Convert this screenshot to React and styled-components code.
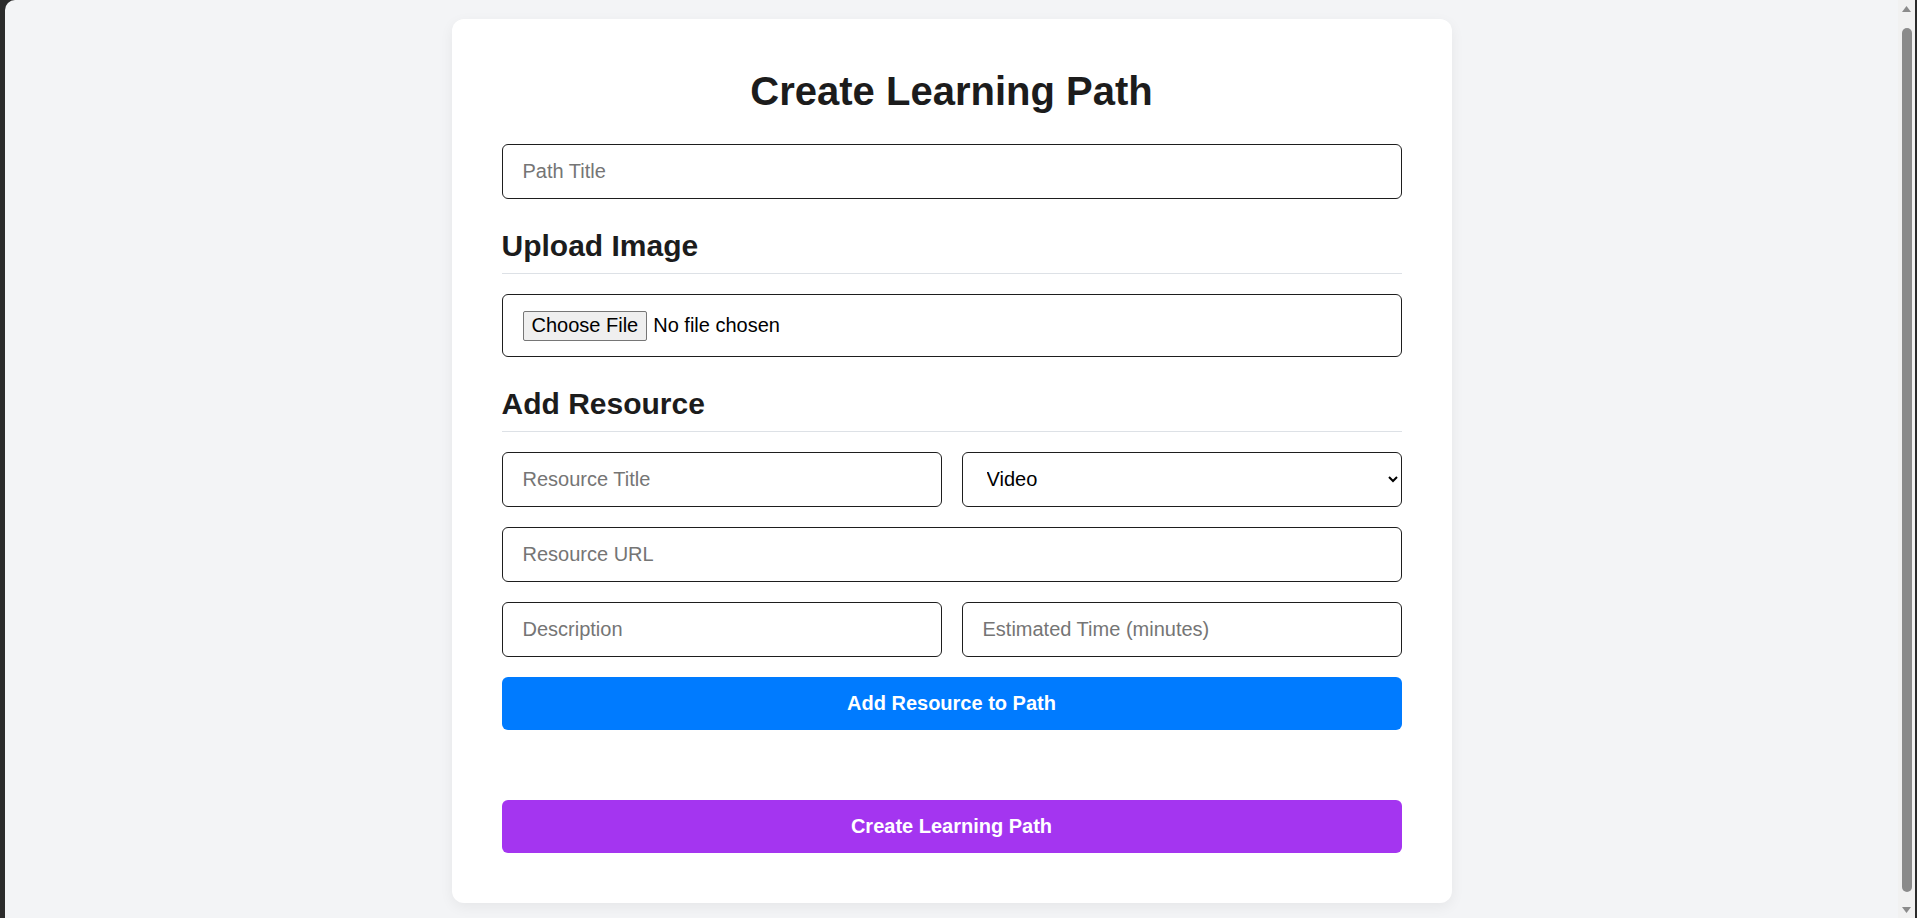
import styled, { createGlobalStyle } from 'styled-components';

const GlobalStyle = createGlobalStyle`
   html, body {
      margin: 0;
      padding: 0;
      background: #2b2b2b;
      overflow: hidden;
   }
   * {
      box-sizing: border-box;
   }
`;

const App = () => {
   return (
      <>
         <GlobalStyle />
         <Shell>
            <Page>
               <Card>
                  <Title>Create Learning Path</Title>
                  <Field type="text" placeholder="Path Title" />

                  <SectionTitle>Upload Image</SectionTitle>
                  <FileField type="file" accept="image/*" />

                  <SectionTitle>Add Resource</SectionTitle>
                  <ResourceGrid>
                     <Field type="text" placeholder="Resource Title" />
                     <Select defaultValue="video">
                        <option value="video">Video</option>
                        <option value="article">Article</option>
                        <option value="course">Course</option>
                        <option value="book">Book</option>
                     </Select>
                     <Field type="url" placeholder="Resource URL" $full />
                     <Field type="text" placeholder="Description" />
                     <Field type="number" placeholder="Estimated Time (minutes)" />
                     <Button type="button" $color="#007bff" $full>Add Resource to Path</Button>
                  </ResourceGrid>

                  <Button type="submit" $color="#a435f0" $top="70px">Create Learning Path</Button>
               </Card>
            </Page>

            {/* page scrollbar, as it shows in the screenshot */}
            <Scrollbar>
               <ScrollArrow>
                  <svg width="9" height="6" viewBox="0 0 9 6"><polygon points="0,6 4.5,0 9,6" fill="#8b8b8b" /></svg>
               </ScrollArrow>
               <ThumbTrack>
                  <Thumb />
               </ThumbTrack>
               <ScrollArrow>
                  <svg width="9" height="6" viewBox="0 0 9 6"><polygon points="0,0 9,0 4.5,6" fill="#8b8b8b" /></svg>
               </ScrollArrow>
            </Scrollbar>
         </Shell>
      </>
   );
};
export default App;


const Shell = styled.div`
   height: 100vh;
   padding: 0 2px 0 5px;
   display: flex;
   flex-flow: row nowrap;
   background: #2b2b2b;
`;

const Page = styled.div`
   flex: 1 1 auto;
   min-width: 0;
   height: 100%;
   overflow: hidden;
   padding: 19px 0 24px;
   background: #f3f4f6;
   border-top-left-radius: 10px;
   font-family: "Liberation Sans", Arial, sans-serif;
`;

const Card = styled.form`
   width: 1000px;
   margin: 0 auto;
   padding: 50px;
   background: #ffffff;
   border-radius: 12px;
   box-shadow: 0 4px 14px rgba(0, 0, 0, 0.06);

   display: flex;
   flex-flow: column nowrap;
`;

const Title = styled.h1`
   margin: 0 0 30px;
   font-size: 40px;
   font-weight: 700;
   line-height: normal;
   text-align: center;
   color: #1c1c1c;
`;

const SectionTitle = styled.h3`
   margin: 30px 0 20px;
   padding-bottom: 10px;
   font-size: 30px;
   font-weight: 700;
   line-height: normal;
   color: #1c1c1c;
   border-bottom: 1px solid #dde1e6;
`;

const Field = styled.input`
   width: 100%;
   grid-column: ${(props) => (props.$full ? '1 / -1' : 'auto')};
   padding: 15px 20px;
   font-family: "Liberation Sans", Arial, sans-serif;
   font-size: 20px;
   line-height: 23px;
   color: #111;
   background: #fff;
   border: 1px solid #1e1e1e;
   border-radius: 6px;
   outline: none;

   &::placeholder {
      color: #757575;
   }

   &::-webkit-outer-spin-button,
   &::-webkit-inner-spin-button {
      -webkit-appearance: none;
      margin: 0;
   }
`;

const FileField = styled(Field)`
   color: #000;
   line-height: 30px;

   &::file-selector-button {
      height: 30px;
      margin-right: 6px;
      padding: 0 8px;
      font-family: "Liberation Sans", Arial, sans-serif;
      font-size: 20px;
      color: #000;
      background: #efefef;
      border: 1px solid #767676;
      border-radius: 2px;
   }
`;

const Select = styled.select`
   width: 100%;
   height: 55px;
   padding: 0 12px 0 20px;
   font-family: "Liberation Sans", Arial, sans-serif;
   font-size: 20px;
   color: #000;
   background: #fff;
   border: 1px solid #1e1e1e;
   border-radius: 6px;
   outline: none;
`;

const ResourceGrid = styled.div`
   display: grid;
   grid-template-columns: 1fr 1fr;
   gap: 20px;
`;

const Button = styled.button`
   width: 100%;
   grid-column: ${(props) => (props.$full ? '1 / -1' : 'auto')};
   margin-top: ${(props) => props.$top || '0'};
   padding: 15px;
   font-family: "Liberation Sans", Arial, sans-serif;
   font-size: 20px;
   font-weight: 700;
   line-height: 23px;
   color: #fff;
   background: ${(props) => props.$color};
   border: none;
   border-radius: 6px;
   cursor: pointer;
`;

const Scrollbar = styled.div`
   flex: 0 0 17px;
   height: 100%;
   display: flex;
   flex-flow: column nowrap;
   background: #f1f1f1;
`;

const ScrollArrow = styled.div`
   flex: 0 0 17px;
   display: flex;
   justify-content: center;
   align-items: center;
`;

const ThumbTrack = styled.div`
   flex: 1 1 auto;
   padding: 11px 0 9px;
   display: flex;
   justify-content: center;
`;

const Thumb = styled.div`
   width: 10px;
   height: 100%;
   background: #8b8b8b;
   border-radius: 5px;
`;
